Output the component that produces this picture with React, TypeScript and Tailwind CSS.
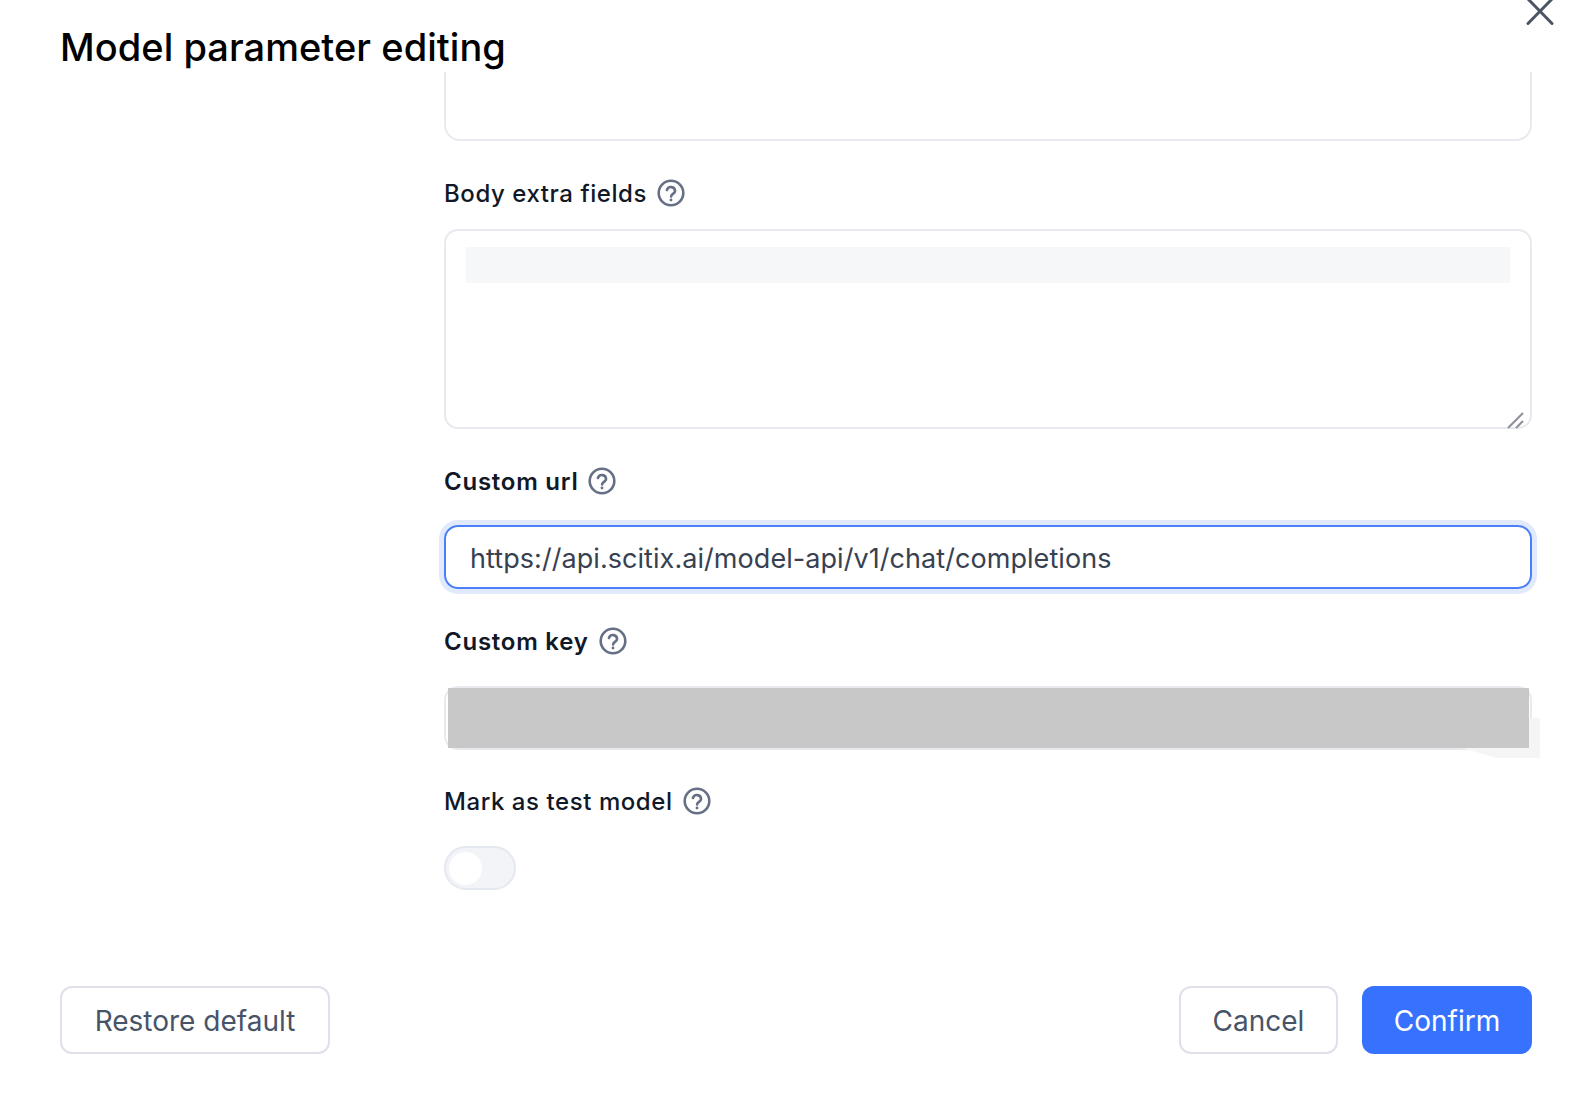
import React from "react";

function Help() {
  return (
    <svg width="28" height="28" viewBox="0 0 28 28" fill="none" className="mb-[2px] shrink-0">
      <circle cx="14" cy="14" r="12.3" stroke="#667085" strokeWidth="2.6" />
      <path d="M9.9 11a4.2 4.2 0 0 1 8.2 1.1c0 2.6-4 3-4 5.3" stroke="#667085" strokeWidth="2.6" strokeLinecap="round" fill="none" />
      <circle cx="14" cy="21" r="1.4" fill="#667085" />
    </svg>
  );
}

function Label({ text, bold }: { text: string; bold?: boolean }) {
  return (
    <div className={`flex h-9 items-center gap-[10px] text-[24px] text-[#111827] ${bold ? "font-semibold tracking-[0.75px]" : "font-medium tracking-[0.57px]"}`}>
      <span>{text}</span>
      <Help />
    </div>
  );
}

export default function App() {
  return (
    <div className="relative flex h-[1108px] w-[1576px] flex-col overflow-hidden bg-white font-[Inter,sans-serif]">
      <button className="absolute right-[22px] top-0 text-[#4b5563]" aria-label="Close">
        <svg width="28" height="26" viewBox="0 0 28 26" fill="none">
          <path d="M2 -1 L26 23.5 M26 -1 L2 23.5" stroke="currentColor" strokeWidth="3" strokeLinecap="round" />
        </svg>
      </button>

      <div className="flex h-[72px] shrink-0 items-center pl-[60px]">
        <h1 className="pt-[22px] text-[38px] font-medium leading-[48px] tracking-[0.05px] text-black">Model parameter editing</h1>
      </div>

      <div className="flex flex-col pl-[444px] pr-[44px]">
        <div className="h-[69px] rounded-b-[16px] border-2 border-t-0 border-[#e9e9ef]" />

        <div className="mt-[35px]">
          <Label text="Body extra fields" />
        </div>
        <div className="relative mt-[17px] h-[200px] rounded-[14px] border-2 border-[#e9e9ef] px-[20px] pt-[16px]">
          <div className="h-[36px] bg-[#f6f7f9]" />
          <svg width="18" height="18" viewBox="0 0 18 18" fill="none" className="absolute bottom-[-2px] right-[5px]">
            <path d="M1 17 L16 2 M9 17 L16 10" stroke="#8b9099" strokeWidth="2" />
          </svg>
        </div>

        <div className="mt-[35px]">
          <Label text="Custom url" bold />
        </div>
        <div className="mt-[25px] flex h-[64px] items-center rounded-[14px] border-2 border-[#4a7ff7] px-[24px] pt-[4px] text-[27px] tracking-[0.06px] text-[#374151] shadow-[0_0_0_5px_#e1e9fd]">
          https://api.scitix.ai/model-api/v1/chat/completions
        </div>

        <div className="mt-[35px]">
          <Label text="Custom key" bold />
        </div>
        <div className="relative mt-[26px] h-[64px] rounded-[14px] border-2 border-[#e9e9ef]">
          <div className="absolute bottom-[-10px] right-[-10px] h-[40px] w-[78px] bg-[#f5f5f6] [clip-path:polygon(85%_0,100%_0,100%_100%,45%_100%,0_75%)]" />
          <div className="absolute bottom-0 left-[2px] right-[1px] top-0 bg-[#c8c8c8]" />
        </div>

        <div className="mt-[34px]">
          <Label text="Mark as test model" />
        </div>
        <div className="mt-[26px] flex h-[44px] w-[72px] items-center rounded-full border-2 border-[#e4e8f0] bg-[#f3f4f7] pl-[3px]">
          <div className="h-[33px] w-[33px] rounded-full bg-white" />
        </div>
      </div>

      <div className="mt-auto flex items-center justify-between pb-[54px] pl-[60px] pr-[44px]">
        <button className="h-[68px] w-[270px] rounded-[12px] border-2 border-[#dfe1ea] bg-white pt-[2px] text-[28px] text-[#475467]">
          Restore default
        </button>
        <div className="flex items-center gap-[24px]">
          <button className="h-[68px] w-[159px] rounded-[12px] border-2 border-[#dfe1ea] bg-white pt-[2px] text-[28px] text-[#475467]">
            Cancel
          </button>
          <button className="h-[68px] w-[170px] rounded-[12px] bg-[#3772ff] pt-[2px] text-[28px] text-white">Confirm</button>
        </div>
      </div>
    </div>
  );
}
